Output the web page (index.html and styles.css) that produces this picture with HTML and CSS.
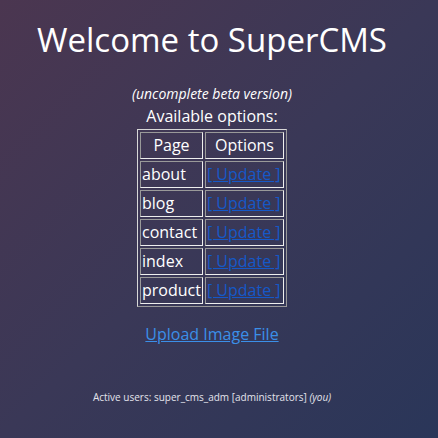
FILE: index.html
```html
<!DOCTYPE html>
<html>
<head>
<meta charset="utf-8">
<link rel="stylesheet" href="styles.css">
</head>
<body>
<div class="page">
  <h1 class="title">Welcome to SuperCMS</h1>
  <p class="beta">(uncomplete beta version)</p>
  <p class="avail">Available options:</p>
  <table class="opts">
    <tr><th>Page</th><th>Options</th></tr>
    <tr><td>about</td><td><a class="upd" href="#">[ Update ]</a></td></tr>
    <tr><td>blog</td><td><a class="upd" href="#">[ Update ]</a></td></tr>
    <tr><td>contact</td><td><a class="upd" href="#">[ Update ]</a></td></tr>
    <tr><td>index</td><td><a class="upd" href="#">[ Update ]</a></td></tr>
    <tr><td>product</td><td><a class="upd" href="#">[ Update ]</a></td></tr>
  </table>
  <p class="upload"><a href="#">Upload Image File</a></p>
  <p class="users">Active users: super_cms_adm [administrators] <i>(you)</i></p>
</div>
</body>
</html>
```
FILE: styles.css
```css
html, body {
  margin: 0;
  height: 100%;
}
body {
  background: linear-gradient(135deg, #4b3650 0%, #3a3857 50%, #2a3659 100%);
  color: #fff;
  font-family: "Open Sans", "DejaVu Sans", sans-serif;
}
.page {
  display: flex;
  flex-direction: column;
  align-items: center;
  padding: 0 14px 0 0;
  text-align: center;
}
.title {
  margin: 17px 0 0;
  font-size: 33px;
  font-weight: 400;
  line-height: 46px;
}
.beta {
  margin: 22px 0 0;
  font-size: 14px;
  font-style: italic;
  line-height: 18px;
}
.avail {
  margin: 3px 0 0;
  font-size: 16px;
  line-height: 20px;
}
.opts {
  border-collapse: separate;
  border-spacing: 2px;
  border: 1px solid;
  border-color: #d8d8d8 #999 #999 #d8d8d8;
  margin-top: 3px;
  font-size: 16px;
}
.opts th, .opts td {
  border: 1px solid;
  border-color: #999 #eee #eee #999;
  padding: 1px;
  line-height: 23px;
  text-align: left;
}
.opts th {
  font-weight: 400;
  text-align: center;
  padding: 1px 9px;
}
.upd {
  color: #1558c8;
}
.upload {
  margin: 15px 0 0;
  font-size: 16px;
  line-height: 24px;
}
.upload a {
  color: #3b8fe8;
}
.users {
  margin: 44px 0 0;
  font-size: 10px;
  color: #e4e4ec;
}
```
